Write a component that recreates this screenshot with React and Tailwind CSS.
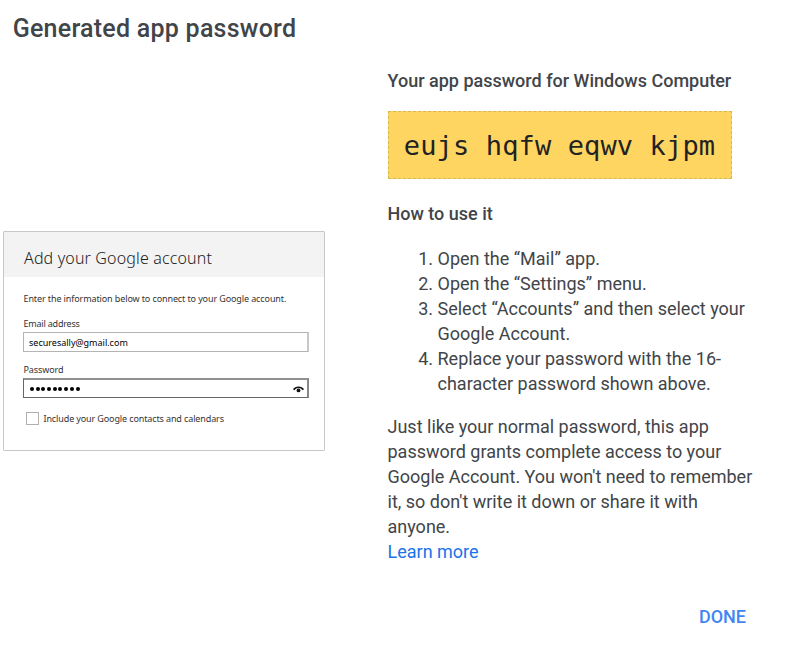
const steps = [
  'Open the “Mail” app.',
  'Open the “Settings” menu.',
  'Select “Accounts” and then select your Google Account.',
  'Replace your password with the 16-character password shown above.',
];

function AccountCard() {
  return (
    <section className="mt-[231px] h-[220px] w-[322px] rounded-[1px] border border-[#c8c8c8] bg-white font-['Noto_Sans',sans-serif] text-[#333]">
      <header className="h-[45px] bg-[#f3f3f3] pl-5 pt-[14px]">
        <h2 className="whitespace-nowrap text-[16px] font-light leading-6 tracking-[0.15px] text-[#222]">Add your Google account</h2>
      </header>
      <div className="pl-[19px] pr-[15px] text-[9px] leading-3">
        <p className="mt-4 whitespace-nowrap pl-[0.5px] tracking-[-0.11px]">Enter the information below to connect to your Google account.</p>
        <p className="mt-[13px] pl-[0.5px] tracking-[-0.2px]">Email address</p>
        <div className="mt-[2px] flex h-5 items-center border border-r-2 border-[#b4b4b4] border-r-[#c8c8c8] pl-[5px] pt-[2px] text-black">securesally@gmail.com</div>
        <p className="mt-3 pl-[0.5px] tracking-[-0.1px]">Password</p>
        <div className="mt-[2px] flex h-5 items-center justify-between border border-r-2 border-t-2 border-[#666] border-r-[#888] border-t-[#909090] pl-[6px] pr-[3px] pt-px">
          <div className="flex gap-[1.7px]">
            {Array.from({ length: 9 }, (_, i) => <span key={i} className="size-1 rounded-full bg-black" />)}
          </div>
          <svg className="h-[7px] w-[11px]" viewBox="0 0 11 7" fill="none" stroke="#111" strokeWidth="1.7">
            <path d="M.7 3.7C2.8.4 8.2.4 10.3 3.7" />
            <circle cx="5.5" cy="4.4" r="1.9" fill="#111" stroke="none" />
          </svg>
        </div>
        <div className="mt-[13px] flex items-center gap-[5px] pl-[2.5px] pt-px">
          <span className="size-[13px] shrink-0 border border-[#b0b0b0]" />
          <span className="whitespace-nowrap tracking-[-0.12px]">Include your Google contacts and calendars</span>
        </div>
      </div>
    </section>
  );
}

export default function App() {
  return (
    <main className="flex h-[653px] w-[788px] flex-col overflow-hidden bg-white font-['Roboto',sans-serif] text-[#414549]">
      <div className="flex">
        <div className="w-[384.5px] shrink-0 pl-[3px]">
          <h1 className="-mb-[45px] whitespace-nowrap pl-[9.7px] pt-[13px] text-[25px] font-medium leading-8 tracking-[0.25px]">Generated app password</h1>
          <AccountCard />
        </div>
        <div className="w-[370px] shrink-0 pl-[3px] pt-[68px] text-[18px] leading-[25px]">
          <h2 className="whitespace-nowrap font-medium">Your app password for Windows Computer</h2>
          <div className="ml-[0.5px] mt-[18px] flex h-[68px] w-[344px] items-center justify-center whitespace-pre border border-dashed border-[#d8b755] bg-[#ffd562] pr-px font-['DejaVu_Sans_Mono',monospace] text-[27px] tracking-[0.13px] text-[#222]">eujs hqfw eqwv kjpm</div>
          <h2 className="mt-[22px] font-medium">How to use it</h2>
          <ol className="mt-5 list-decimal pl-[50px]">
            {steps.map((step) => <li key={step}>{step}</li>)}
          </ol>
          <p className="mt-[18px]">Just like your normal password, this app password grants complete access to your Google Account. You won't need to remember it, so don't write it down or share it with anyone.</p>
          <a className="text-[#1a73e8]">Learn more</a>
        </div>
      </div>
      <button className="mr-[42px] mt-10 self-end text-[18px] font-medium leading-[25px] text-[#4285f4]">DONE</button>
    </main>
  );
}
